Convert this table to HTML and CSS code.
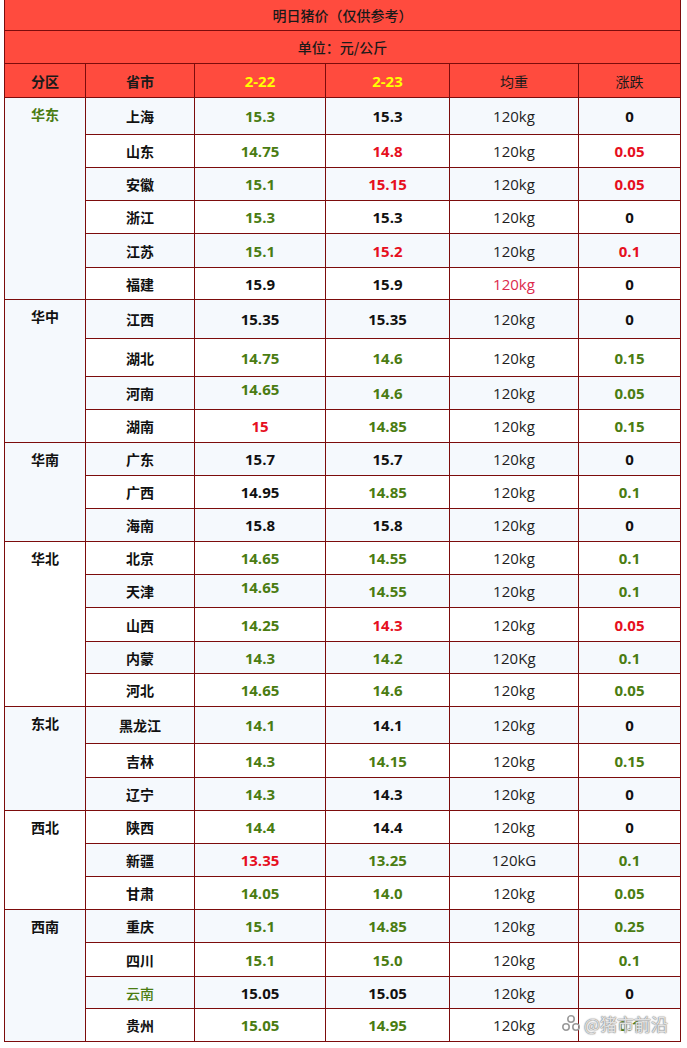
FILE: index.html
```html
<!DOCTYPE html>
<html lang="zh-CN">
<head>
<meta charset="utf-8">
<title>明日猪价</title>
<link rel="stylesheet" href="styles.css">
</head>
<body>
<div class="sheet">
  <div class="banner title">明日猪价（仅供参考）</div>
  <div class="banner unit">单位：元/公斤</div>
  <div class="row head">
    <div class="b">分区</div><div class="b">省市</div><div class="date">2-22</div><div class="date">2-23</div><div>均重</div><div>涨跌</div>
  </div>

  <div class="row alt"><div class="region s6 g">华东</div><div class="prov">上海</div><div class="n g">15.3</div><div class="n">15.3</div><div class="w">120kg</div><div class="n">0</div></div>
  <div class="row"><div class="prov">山东</div><div class="n g">14.75</div><div class="n r">14.8</div><div class="w">120kg</div><div class="n r">0.05</div></div>
  <div class="row alt"><div class="prov">安徽</div><div class="n g">15.1</div><div class="n r">15.15</div><div class="w">120kg</div><div class="n r">0.05</div></div>
  <div class="row"><div class="prov">浙江</div><div class="n g">15.3</div><div class="n">15.3</div><div class="w">120kg</div><div class="n">0</div></div>
  <div class="row alt"><div class="prov">江苏</div><div class="n g">15.1</div><div class="n r">15.2</div><div class="w">120kg</div><div class="n r">0.1</div></div>
  <div class="row"><div class="prov">福建</div><div class="n">15.9</div><div class="n">15.9</div><div class="w pink">120kg</div><div class="n">0</div></div>

  <div class="row alt"><div class="region s4">华中</div><div class="prov">江西</div><div class="n">15.35</div><div class="n">15.35</div><div class="w">120kg</div><div class="n">0</div></div>
  <div class="row"><div class="prov">湖北</div><div class="n g">14.75</div><div class="n g">14.6</div><div class="w">120kg</div><div class="n g">0.15</div></div>
  <div class="row alt"><div class="prov">河南</div><div class="n g hi">14.65</div><div class="n g">14.6</div><div class="w">120kg</div><div class="n g">0.05</div></div>
  <div class="row"><div class="prov">湖南</div><div class="n r">15</div><div class="n g">14.85</div><div class="w">120kg</div><div class="n g">0.15</div></div>

  <div class="row alt"><div class="region s3">华南</div><div class="prov">广东</div><div class="n">15.7</div><div class="n">15.7</div><div class="w">120kg</div><div class="n">0</div></div>
  <div class="row"><div class="prov">广西</div><div class="n">14.95</div><div class="n g">14.85</div><div class="w">120kg</div><div class="n g">0.1</div></div>
  <div class="row alt"><div class="prov">海南</div><div class="n">15.8</div><div class="n">15.8</div><div class="w">120kg</div><div class="n">0</div></div>

  <div class="row"><div class="region s5">华北</div><div class="prov">北京</div><div class="n g">14.65</div><div class="n g">14.55</div><div class="w">120kg</div><div class="n g">0.1</div></div>
  <div class="row alt"><div class="prov">天津</div><div class="n g hi">14.65</div><div class="n g">14.55</div><div class="w">120kg</div><div class="n g">0.1</div></div>
  <div class="row"><div class="prov">山西</div><div class="n g">14.25</div><div class="n r">14.3</div><div class="w">120kg</div><div class="n r">0.05</div></div>
  <div class="row alt"><div class="prov">内蒙</div><div class="n g">14.3</div><div class="n g">14.2</div><div class="w">120Kg</div><div class="n g">0.1</div></div>
  <div class="row"><div class="prov">河北</div><div class="n g">14.65</div><div class="n g">14.6</div><div class="w">120kg</div><div class="n g">0.05</div></div>

  <div class="row alt"><div class="region s3">东北</div><div class="prov">黑龙江</div><div class="n g">14.1</div><div class="n">14.1</div><div class="w">120kg</div><div class="n">0</div></div>
  <div class="row"><div class="prov">吉林</div><div class="n g">14.3</div><div class="n g">14.15</div><div class="w">120kg</div><div class="n g">0.15</div></div>
  <div class="row alt"><div class="prov">辽宁</div><div class="n g">14.3</div><div class="n">14.3</div><div class="w">120kg</div><div class="n">0</div></div>

  <div class="row"><div class="region s3">西北</div><div class="prov">陕西</div><div class="n g">14.4</div><div class="n">14.4</div><div class="w">120kg</div><div class="n">0</div></div>
  <div class="row alt"><div class="prov">新疆</div><div class="n r">13.35</div><div class="n g">13.25</div><div class="w">120kG</div><div class="n g">0.1</div></div>
  <div class="row"><div class="prov">甘肃</div><div class="n g">14.05</div><div class="n g">14.0</div><div class="w">120kg</div><div class="n g">0.05</div></div>

  <div class="row alt"><div class="region s4">西南</div><div class="prov">重庆</div><div class="n g">15.1</div><div class="n g">14.85</div><div class="w">120kg</div><div class="n g">0.25</div></div>
  <div class="row"><div class="prov">四川</div><div class="n g">15.1</div><div class="n g">15.0</div><div class="w">120kg</div><div class="n g">0.1</div></div>
  <div class="row alt"><div class="prov gl">云南</div><div class="n">15.05</div><div class="n">15.05</div><div class="w">120kg</div><div class="n">0</div></div>
  <div class="row"><div class="prov">贵州</div><div class="n g">15.05</div><div class="n g">14.95</div><div class="w">120kg</div><div class="n g">0.1</div></div>
</div>

<div class="watermark">
  <svg class="wm-icon" width="20" height="20" viewBox="0 0 20 20" aria-hidden="true">
    <g fill="none" stroke="#9a9a9a" stroke-width="1.6">
      <circle cx="10" cy="5" r="3.2"/>
      <circle cx="5" cy="13" r="3.2"/>
      <circle cx="15" cy="13" r="3.2"/>
    </g>
  </svg>
  <span class="wm-text">@猪市前沿</span>
</div>
</body>
</html>
```

FILE: styles.css
```css
html, body {
  margin: 0;
  padding: 0;
  background: #ffffff;
}

body {
  position: relative;
  width: 687px;
  height: 1048px;
  overflow: hidden;
  font-family: "Open Sans", "Noto Sans CJK SC", sans-serif;
  color: #111111;
}

.sheet {
  margin-left: 4px;
  width: 677px;
  box-sizing: border-box;
  padding: 0 1px 1px 1px;
  background: #7c0c0c;
  display: grid;
  grid-template-columns: 80px 108px 130px 123px 128px 101px;
  grid-template-rows: 30px 32px 33px 36px 32px 32px 32px 33px 31px 38px 37px 32px 32px 32px 32px 32px 32px 32px 33px 31px 32px 36px 33px 32px 32px 32px 32px 32px 33px 31px 32px;
  gap: 1px;
}

.row {
  display: contents;
}

.row > div {
  background: #ffffff;
  display: flex;
  align-items: center;
  justify-content: center;
  font-size: 15px;
}

.row.alt > div {
  background: #f5f9fd;
}

.banner {
  grid-column: 1 / -1;
  background: #ff4b3e;
  display: flex;
  align-items: center;
  justify-content: center;
  font-family: "Noto Sans CJK SC", sans-serif;
  font-size: 14px;
  color: #1a1a1a;
  font-weight: 500;
}

.row.head > div {
  background: #ff4b3e;
  font-family: "Noto Sans CJK SC", sans-serif;
  font-size: 14px;
  color: #1a1a1a;
}

.row.head > .b {
  font-weight: 700;
}

.row.head > .date {
  font-family: "Open Sans", sans-serif;
  font-weight: 700;
  font-size: 15px;
  color: #ffff00;
}

.row > .region {
  align-items: flex-start;
  padding-top: 6px;
  font-family: "Noto Sans CJK SC", sans-serif;
  font-size: 14px;
  font-weight: 700;
}

.s6 { grid-row: span 6; }
.s5 { grid-row: span 5; }
.s4 { grid-row: span 4; }
.s3 { grid-row: span 3; }

.row > .prov {
  font-family: "Noto Sans CJK SC", sans-serif;
  font-size: 14px;
  font-weight: 700;
  color: #111111;
}

.row > .prov.gl {
  color: #4a7c12;
  font-weight: 500;
}

.row > .n {
  font-weight: 700;
  font-size: 15px;
  color: #111111;
}

.row > .w {
  font-weight: 400;
  font-size: 15px;
  color: #1e1e1e;
}

.row > .hi {
  padding-bottom: 8px;
}

.row > .g,
.row > .region.g {
  color: #4a7c12;
}

.row > .r {
  color: #e60f1e;
}

.row > .pink {
  color: #dc2a4c;
}

.watermark {
  position: absolute;
  left: 561px;
  top: 1011px;
  display: flex;
  align-items: center;
  gap: 3px;
}

.wm-text {
  font-family: "Noto Sans CJK SC", sans-serif;
  font-size: 17px;
  color: rgba(255, 255, 255, 0.75);
  text-shadow: 0 0 1px #8a8a8a, 0 0 1px #8a8a8a, 0 0 2px #9a9a9a;
}
```
